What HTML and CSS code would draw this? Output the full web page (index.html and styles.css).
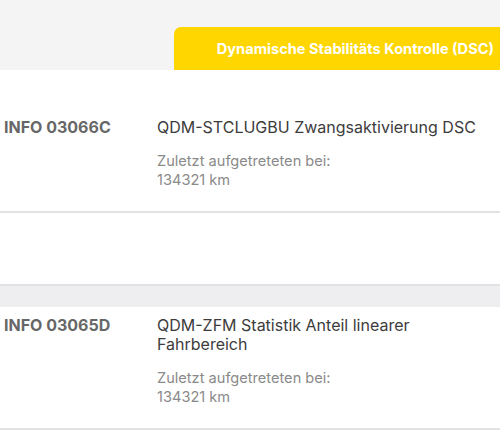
FILE: index.html
```html
<!DOCTYPE html>
<html lang="de">
  <head>
    <meta charset="UTF-8" />
    <meta name="viewport" content="width=device-width, initial-scale=1.0" />
    <title>Fehlerspeicher DSC</title>
    <link rel="stylesheet" href="styles.css">
  </head>
  <body>
    <div class="header">
      <div class="tab">Dynamische Stabilitäts Kontrolle (DSC)</div>
    </div>

    <div class="entry first">
      <div class="code">INFO 03066C</div>
      <div class="details">
        <div class="title">QDM-STCLUGBU Zwangsaktivierung DSC</div>
        <div class="meta">Zuletzt aufgetreteten bei:<br />134321 km</div>
      </div>
    </div>

    <div class="spacer"></div>
    <div class="band"></div>

    <div class="entry">
      <div class="code">INFO 03065D</div>
      <div class="details">
        <div class="title">QDM-ZFM Statistik Anteil linearer Fahrbereich</div>
        <div class="meta">Zuletzt aufgetreteten bei:<br />134321 km</div>
      </div>
    </div>
  </body>
</html>
```

FILE: styles.css
```css
body {
  font-family: Inter, "Noto Sans", Arial, sans-serif;
  margin: 0;
  padding: 0;
  background: #fff;
  color: #444;
}

.header {
  background: #f4f4f5;
  height: 70px;
  display: flex;
  justify-content: flex-end;
  align-items: flex-end;
}

.tab {
  width: 326px;
  height: 43px;
  box-sizing: border-box;
  background: #ffd600;
  border-radius: 7px 0 0 0;
  color: #fff;
  font-size: 14.6px;
  font-weight: 700;
  display: flex;
  align-items: center;
  justify-content: flex-end;
  padding-right: 6px;
}

.entry {
  display: flex;
  padding: 9px 0 21px 4px;
  border-bottom: 2px solid #e2e2e4;
}

.entry.first {
  padding-top: 48px;
}

.code {
  width: 153px;
  flex-shrink: 0;
  font-size: 16px;
  font-weight: 700;
  line-height: 19px;
  color: #676767;
}

.details {
  flex: 1;
  padding-right: 16px;
}

.title {
  font-size: 16px;
  line-height: 19px;
  color: #3c3c3c;
}

.meta {
  margin-top: 15px;
  font-size: 14.6px;
  line-height: 19px;
  color: #8a8a8a;
}

.spacer {
  height: 71px;
}

.band {
  height: 21px;
  background: #eeeef0;
  border-top: 2px solid #e2e2e4;
}
```
